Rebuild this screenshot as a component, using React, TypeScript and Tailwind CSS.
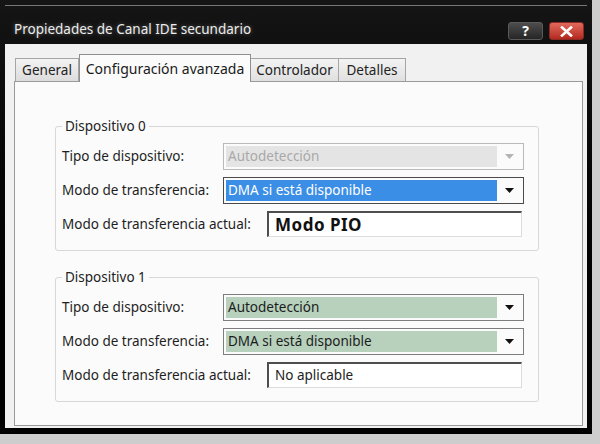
import React from "react";

type Variant = "disabled" | "selected" | "green";

function Arrow({ color }: { color: string }) {
  return (
    <svg width="9" height="5" viewBox="0 0 9 5">
      <path d="M0 0 L9 0 L4.5 5 Z" fill={color} />
    </svg>
  );
}

function Combo({ text, variant, h }: { text: string; variant: Variant; h: string }) {
  const outer =
    variant === "disabled"
      ? "border-[#b9b9b9]"
      : variant === "selected"
      ? "border-[#4a4a4a]"
      : "border-[#7d7d7d]";
  const inner =
    variant === "disabled"
      ? "bg-[#e4e4e4] text-[#a9a9a9]"
      : variant === "selected"
      ? "bg-[#3b8ee6] text-white"
      : "bg-[#b7d1bc] text-[#1c1c1c]";
  const arrow = variant === "disabled" ? "#b4b4b4" : "#111";
  return (
    <div className={`flex ${h} w-[301px] border ${outer} bg-[#fbfbfb] p-[2px]`}>
      <div className={`flex flex-1 items-center pl-[2px] text-[13.5px] ${inner}`}>{text}</div>
      <div className="flex w-[24px] items-center justify-center">
        <Arrow color={arrow} />
      </div>
    </div>
  );
}

function TextBox({ children, h }: { children: React.ReactNode; h: string }) {
  return (
    <div
      className={`flex ${h} w-[255px] items-center border-t-2 border-l-2 border-r border-b border-t-[#4e4e4e] border-l-[#4e4e4e] border-r-[#dcdcdc] border-b-[#dcdcdc] bg-white pl-[6px]`}
    >
      {children}
    </div>
  );
}

function Group({
  title,
  combo1,
  combo2,
  actual,
  v1,
  v2,
  top,
}: {
  title: string;
  combo1: string;
  combo2: string;
  actual: React.ReactNode;
  v1: Variant;
  v2: Variant;
  top: string;
}) {
  return (
    <div className={`relative ${top} ml-[40px] w-[484px] rounded-[3px] border border-[#d7d7d7] pb-[13px] pl-[6px] pt-[16px]`}>
      <span className="absolute -top-[10px] left-[6px] bg-[#fbfbfb] px-[3px] text-[13.5px] leading-[18px] text-[#222]">
        {title}
      </span>
      <div className="flex flex-col gap-[7px]">
        <div className="flex items-center">
          <span className="w-[161px] text-[13.5px] text-[#1e1e1e]">Tipo de dispositivo:</span>
          <Combo text={combo1} variant={v1} h="h-[27px]" />
        </div>
        <div className="flex items-center">
          <span className="w-[161px] text-[13.5px] text-[#1e1e1e]">Modo de transferencia:</span>
          <Combo text={combo2} variant={v2} h="h-[27px]" />
        </div>
        <div className="flex items-center">
          <span className="w-[205px] text-[13.5px] text-[#1e1e1e]">Modo de transferencia actual:</span>
          <TextBox h="h-[26px]">{actual}</TextBox>
        </div>
      </div>
    </div>
  );
}

export default function App() {
  return (
    <div className="h-[444px] w-[600px] overflow-hidden bg-[#cdcdcd] font-['Noto_Sans','DejaVu_Sans',sans-serif]">
      <div className="flex h-[434px] w-[592px] flex-col bg-gradient-to-b from-[#151515] to-[#000] px-[5px] pb-[6px]">
        {/* title bar */}
        <div className="flex h-[44px] flex-col">
          <div className="mt-[5px] h-[1px] w-full bg-[#777]" />
          <div className="flex flex-1 items-start pt-[14px]">
            <span className="pl-[9px] text-[13.5px] leading-[18px] text-[#ececec] [text-shadow:0_0_4px_rgba(255,255,255,0.35)]">
              Propiedades de Canal IDE secundario
            </span>
            <div className="ml-auto mr-[3px] mt-[2px] flex gap-[6px]">
              <div className="flex h-[18px] w-[35px] items-center justify-center rounded-[3px] border border-[#5a5a5a] bg-gradient-to-b from-[#4d4d4d] to-[#262626] text-[14px] font-bold leading-none text-white">
                ?
              </div>
              <div className="flex h-[18px] w-[35px] items-center justify-center rounded-[3px] border border-[#8a2a22] bg-gradient-to-b from-[#e2685c] to-[#b3281e]">
                <svg width="13" height="11" viewBox="0 0 13 11">
                  <path d="M2 1.5 L11 9.5 M11 1.5 L2 9.5" stroke="#fff" strokeWidth="2.6" strokeLinecap="square" />
                </svg>
              </div>
            </div>
          </div>
        </div>
        {/* client */}
        <div className="flex flex-1 flex-col bg-[#f1f1f1] pb-[2px] pl-[9px] pr-[4px] pt-[9px]">
          <div className="relative z-10 flex h-[28px] items-end pl-[1px]">
            <div className="flex h-[23px] w-[64px] items-center justify-center border border-b-0 border-[#a5a5a5] bg-gradient-to-b from-[#f3f3f3] to-[#dcdcdc] text-[13.5px] text-[#222]">
              General
            </div>
            <div className="-mb-px flex h-[28px] w-[172px] items-start justify-center border border-b-0 border-[#8f8f8f] bg-[#fbfbfb] pt-[3px] text-[14px] text-[#1a1a1a]">
              Configuración avanzada
            </div>
            <div className="flex h-[23px] w-[88px] items-center justify-center border border-b-0 border-l-0 border-[#a5a5a5] bg-gradient-to-b from-[#f3f3f3] to-[#e0e0e0] text-[13.5px] text-[#222]">
              Controlador
            </div>
            <div className="flex h-[23px] w-[67px] items-center justify-center border border-b-0 border-l-0 border-[#a5a5a5] bg-gradient-to-b from-[#f3f3f3] to-[#e0e0e0] text-[13.5px] text-[#222]">
              Detalles
            </div>
          </div>
          <div className="flex flex-1 flex-col border border-[#9a9a9a] bg-[#fbfbfb]">
            <Group
              top="mt-[44px]"
              title="Dispositivo 0"
              combo1="Autodetección"
              combo2="DMA si está disponible"
              v1="disabled"
              v2="selected"
              actual={<span className="text-[17px] font-bold tracking-[0.5px] text-[#111]">Modo PIO</span>}
            />
            <Group
              top="mt-[26px]"
              title="Dispositivo 1"
              combo1="Autodetección"
              combo2="DMA si está disponible"
              v1="green"
              v2="green"
              actual={<span className="text-[13.5px] text-[#222]">No aplicable</span>}
            />
          </div>
        </div>
      </div>
    </div>
  );
}
